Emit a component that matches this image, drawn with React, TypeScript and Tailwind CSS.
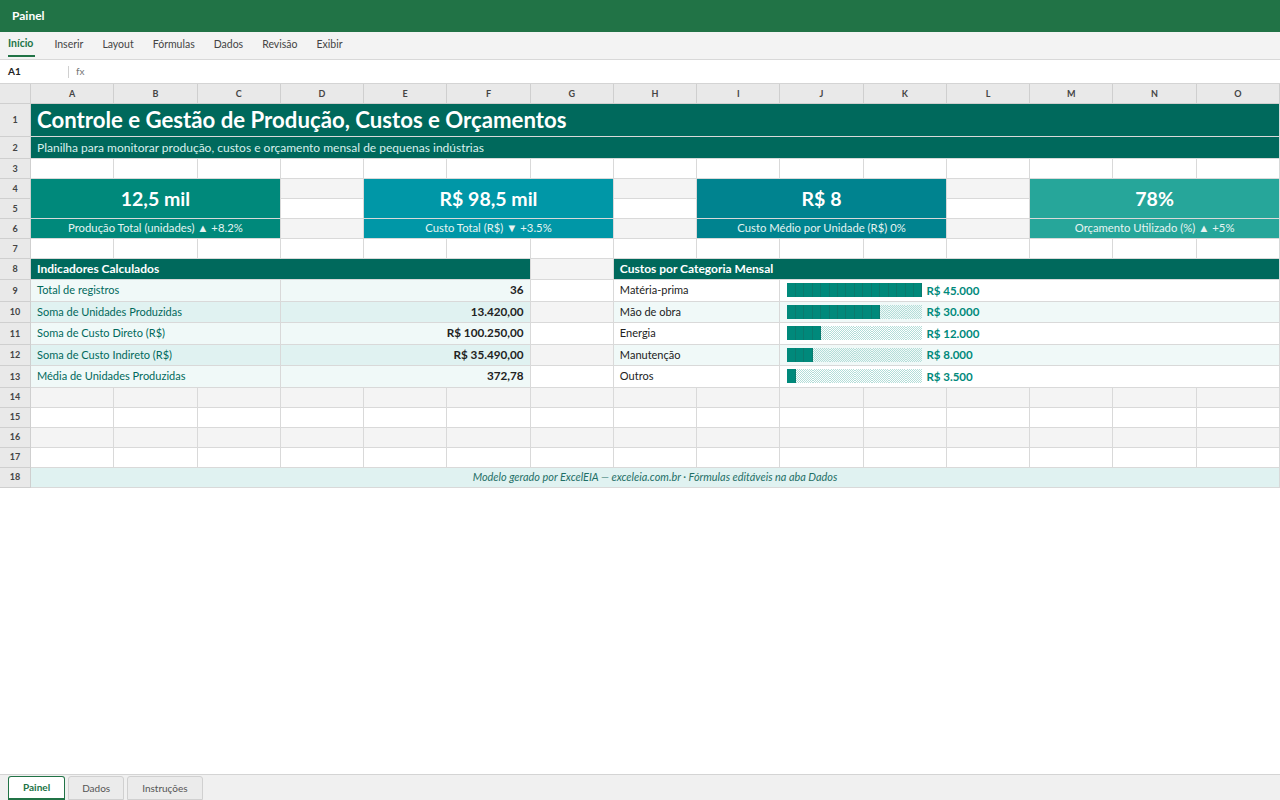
import React from 'react';

const COLS = ['A', 'B', 'C', 'D', 'E', 'F', 'G', 'H', 'I', 'J', 'K', 'L', 'M', 'N', 'O'];

const indicadores = [
  { label: 'Total de registros', value: '36' },
  { label: 'Soma de Unidades Produzidas', value: '13.420,00' },
  { label: 'Soma de Custo Direto (R$)', value: 'R$ 100.250,00' },
  { label: 'Soma de Custo Indireto (R$)', value: 'R$ 35.490,00' },
  { label: 'Média de Unidades Produzidas', value: '372,78' },
];

const categorias = [
  { label: 'Matéria-prima', value: 45000, text: 'R$ 45.000' },
  { label: 'Mão de obra', value: 30000, text: 'R$ 30.000' },
  { label: 'Energia', value: 12000, text: 'R$ 12.000' },
  { label: 'Manutenção', value: 8000, text: 'R$ 8.000' },
  { label: 'Outros', value: 3500, text: 'R$ 3.500' },
];

const line = 'border-r border-b border-[#d9d9d9]';

const RowHead: React.FC<{ n: number }> = ({ n }) => (
  <div className="flex items-center justify-center border-r border-b border-[#cfcfcf] bg-[#e9e9e9] text-[9px] font-bold text-[#444]">
    {n}
  </div>
);

// empty cell, even rows get the light grey stripe
const Empty: React.FC<{ row: number }> = ({ row }) => (
  <div className={`${line} ${row % 2 === 0 ? 'bg-[#f4f4f4]' : 'bg-white'}`} />
);

const EmptyRow: React.FC<{ row: number }> = ({ row }) => (
  <>
    <RowHead n={row} />
    {COLS.map((c) => (
      <Empty key={c} row={row} />
    ))}
  </>
);

const KpiValue: React.FC<{ value: string; bg: string }> = ({ value, bg }) => (
  <div className={`col-span-3 row-span-2 flex items-center justify-center ${line} ${bg} text-[19.5px] font-bold text-white`}>
    {value}
  </div>
);

const KpiLabel: React.FC<{ label: string; bg: string }> = ({ label, bg }) => (
  <div className={`col-span-3 flex items-center justify-center ${line} ${bg} text-[11.3px] text-[#e6f4f2]`}>
    {label}
  </div>
);

const Bar: React.FC<{ value: number; text: string }> = ({ value, text }) => {
  const filled = Math.round((value / 45000) * 16);
  return (
    <div className="flex items-center gap-[4px] pl-[7px]">
      <div className="flex h-[14px]">
        {Array.from({ length: 16 }).map((_, i) =>
          i < filled ? (
            <span key={i} className="h-full w-[8.45px] border-r border-[#0a7a6e] bg-[#00897b]" />
          ) : (
            <span
              key={i}
              className="h-full w-[8.45px] bg-[repeating-conic-gradient(#b3ddd8_0_25%,transparent_0_50%)] bg-[length:2px_2px]"
            />
          )
        )}
      </div>
      <span className="text-[11.5px] font-bold text-[#00897b]">{text}</span>
    </div>
  );
};

export default function App() {
  return (
    <div className="flex h-[800px] w-[1280px] flex-col overflow-hidden bg-white font-[Lato,sans-serif] text-[#222]">
      {/* title bar */}
      <div className="flex h-8 items-center bg-[#217346] px-3 text-[12px] font-bold text-white">Painel</div>

      {/* ribbon tabs */}
      <div className="flex h-[28px] items-start gap-[19px] border-b border-[#d8d8d8] bg-[#f3f3f3] pl-2 text-[10.5px] text-[#444]">
        <div className="flex h-[25px] items-center border-b-2 border-[#217346] pr-[2px] font-bold text-[#217346]">Início</div>
        <div className="flex h-[25px] items-center">Inserir</div>
        <div className="flex h-[25px] items-center">Layout</div>
        <div className="flex h-[25px] items-center">Fórmulas</div>
        <div className="flex h-[25px] items-center">Dados</div>
        <div className="flex h-[25px] items-center">Revisão</div>
        <div className="flex h-[25px] items-center">Exibir</div>
      </div>

      {/* formula bar */}
      <div className="flex h-[24px] items-center border-b border-[#d4d4d4] bg-white text-[10px]">
        <div className="w-[68px] pl-2 font-bold">A1</div>
        <div className="h-3 border-l border-[#d0d0d0]" />
        <div className="pl-[7px] text-[#777]">fx</div>
      </div>

      {/* sheet grid */}
      <div className="grid grid-cols-[31px_repeat(15,minmax(0,1fr))] grid-rows-[20px_33px_22px_20px_20px_20px_20px_20px_21px_21.5px_21.5px_21.5px_21.5px_21.5px_20px_20px_20px_20px_20px]">
        <div className="border-r border-b border-[#cfcfcf] bg-[#e9e9e9]" />
        {COLS.map((c) => (
          <div key={c} className="flex items-center justify-center border-r border-b border-[#cfcfcf] bg-[#e9e9e9] text-[9px] font-bold text-[#444]">
            {c}
          </div>
        ))}

        <RowHead n={1} />
        <div className={`col-span-15 flex items-center ${line} bg-[#00695c] pl-[6px] text-[22.2px] font-bold text-white`}>
          Controle e Gestão de Produção, Custos e Orçamentos
        </div>

        <RowHead n={2} />
        <div className={`col-span-15 flex items-center ${line} bg-[#00695c] pl-[6px] text-[12px] text-[#d9efec]`}>
          Planilha para monitorar produção, custos e orçamento mensal de pequenas indústrias
        </div>

        <EmptyRow row={3} />

        <RowHead n={4} />
        <KpiValue value="12,5 mil" bg="bg-[#00897b]" />
        <Empty row={4} />
        <KpiValue value="R$ 98,5 mil" bg="bg-[#0097a7]" />
        <Empty row={4} />
        <KpiValue value="R$ 8" bg="bg-[#00838f]" />
        <Empty row={4} />
        <KpiValue value="78%" bg="bg-[#26a69a]" />

        <RowHead n={5} />
        <Empty row={5} />
        <Empty row={5} />
        <Empty row={5} />

        <RowHead n={6} />
        <KpiLabel label="Produção Total (unidades) ▲ +8.2%" bg="bg-[#00897b]" />
        <Empty row={6} />
        <KpiLabel label="Custo Total (R$) ▼ +3.5%" bg="bg-[#0097a7]" />
        <Empty row={6} />
        <KpiLabel label="Custo Médio por Unidade (R$) 0%" bg="bg-[#00838f]" />
        <Empty row={6} />
        <KpiLabel label="Orçamento Utilizado (%) ▲ +5%" bg="bg-[#26a69a]" />

        <EmptyRow row={7} />

        <RowHead n={8} />
        <div className={`col-span-6 flex items-center ${line} bg-[#00695c] pl-[6px] text-[12px] font-bold text-white`}>
          Indicadores Calculados
        </div>
        <Empty row={8} />
        <div className={`col-span-8 flex items-center ${line} bg-[#00695c] pl-[6px] text-[12px] font-bold text-white`}>
          Custos por Categoria Mensal
        </div>

        {indicadores.map((ind, i) => {
          const row = 9 + i;
          const cat = categorias[i];
          const leftBg = i % 2 === 0 ? 'bg-[#f0f9f8]' : 'bg-[#e0f2f1]';
          const rightBg = i % 2 === 0 ? 'bg-white' : 'bg-[#f0f9f8]';
          return (
            <React.Fragment key={row}>
              <RowHead n={row} />
              <div className={`col-span-3 flex items-center ${line} ${leftBg} pl-[6px] text-[11px] text-[#00695c]`}>
                {ind.label}
              </div>
              <div className={`col-span-3 flex items-center justify-end ${line} ${leftBg} pr-[6px] text-[11.7px] font-bold text-[#222]`}>
                {ind.value}
              </div>
              <Empty row={row} />
              <div className={`col-span-2 flex items-center ${line} ${rightBg} pl-[6px] text-[11px] text-[#222]`}>
                {cat.label}
              </div>
              <div className={`col-span-6 flex ${line} ${rightBg}`}>
                <Bar value={cat.value} text={cat.text} />
              </div>
            </React.Fragment>
          );
        })}

        <EmptyRow row={14} />
        <EmptyRow row={15} />
        <EmptyRow row={16} />
        <EmptyRow row={17} />

        <RowHead n={18} />
        <div className={`col-span-15 flex items-center justify-center ${line} bg-[#e0f2f1] text-[10.9px] italic text-[#1f6f66]`}>
          Modelo gerado por ExcelEIA — exceleia.com.br · Fórmulas editáveis na aba Dados
        </div>
      </div>

      <div className="flex-1" />

      {/* sheet tabs */}
      <div className="flex h-[26px] items-end gap-[3px] border-t border-[#d4d4d4] bg-[#f0f0f0] pl-2 text-[10px]">
        <div className="flex h-[24px] items-center rounded-t-[3px] border border-b-2 border-[#217346] bg-white px-[14px] font-bold text-[#217346]">
          Painel
        </div>
        <div className="flex h-[24px] items-center rounded-t-[3px] border border-[#d0d0d0] bg-[#ebebeb] px-[13px] text-[#555]">
          Dados
        </div>
        <div className="flex h-[24px] items-center rounded-t-[3px] border border-[#d0d0d0] bg-[#ebebeb] px-[14px] text-[#555]">
          Instruções
        </div>
      </div>
    </div>
  );
}
